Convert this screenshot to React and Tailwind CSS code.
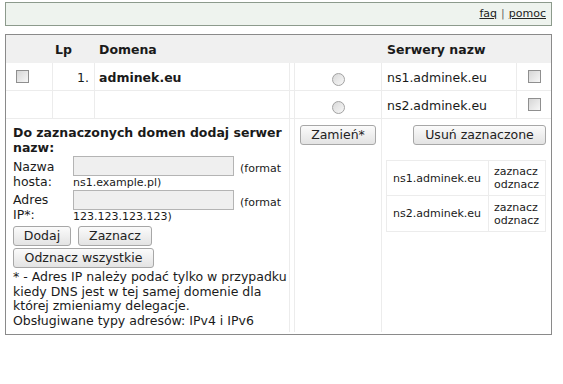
import React from "react";

const font = { fontFamily: '"DejaVu Sans", Verdana, sans-serif' };

const Check = () => (
  <span className="inline-block w-[13px] h-[13px] border border-[#8f8f8f] bg-gradient-to-br from-[#d6d6d6] to-[#f7f7f7]" />
);

const Radio = () => (
  <span className="inline-block w-[13px] h-[13px] rounded-full border border-[#a2a2a2] bg-gradient-to-br from-[#d9d9d9] to-[#f8f8f8]" />
);

const Btn = ({ children, className = "" }) => (
  <button
    className={
      "h-[20px] px-[8px] border border-[#a7a7a7] rounded-[3px] bg-gradient-to-b from-[#fbfbfb] to-[#e3e3e3] text-[12.5px] leading-none text-[#222] " +
      className
    }
  >
    {children}
  </button>
);

const App = () => {
  const servers = ["ns1.adminek.eu", "ns2.adminek.eu"];

  return (
    <div className="w-[563px] h-[384px] bg-white text-[#1a1a1a] pt-[2px]" style={font}>
      {/* top bar */}
      <div className="ml-[5px] w-[547px] h-[24px] border border-[#8c9a8c] bg-[#eef3ee] flex items-center justify-end pr-[5px] text-[11px] text-[#222]">
        <a className="underline">faq</a>
        <span className="mx-[4px] text-[#666]">|</span>
        <a className="underline">pomoc</a>
      </div>

      {/* main table */}
      <div className="ml-[5px] mt-[8px] w-[547px] h-[301px] border border-[#8a8a8a] text-[12.5px]">
        <div className="grid grid-cols-[47px_42px_195px_5px_87px_135px_34px]">
          {/* header */}
          <div className="col-span-7 grid grid-cols-subgrid h-[28px] bg-[#f0f0f0] font-bold items-center pt-[2px]">
            <div />
            <div className="pl-[2px]">Lp</div>
            <div className="pl-[4px]">Domena</div>
            <div />
            <div />
            <div className="col-span-2 pl-[5px]">Serwery nazw</div>
          </div>

          {servers.map((ns, i) => (
            <div key={ns} className="col-span-7 grid grid-cols-subgrid h-[28px] border-b border-[#ececec] items-center">
              <div className="h-full border-r border-[#ececec] flex items-center pl-[10px]">
                {i === 0 && <Check />}
              </div>
              <div className="h-full border-r border-[#ececec] flex items-center justify-end pr-[5px] pt-[4px]">
                {i === 0 && "1."}
              </div>
              <div className="h-full border-r border-[#ececec] flex items-center pl-[4px] pt-[4px] font-bold">
                {i === 0 && "adminek.eu"}
              </div>
              <div className="h-full border-r border-[#ececec]" />
              <div className="h-full border-r border-[#ececec] flex items-center justify-center pt-[5px]">
                <Radio />
              </div>
              <div className="h-full border-r border-[#ececec] flex items-center pl-[5px] pt-[4px]">{ns}</div>
              <div className="h-full flex items-center justify-center">
                <Check />
              </div>
            </div>
          ))}

          {/* bottom section */}
          <div className="col-span-3 h-[213px] border-r border-[#ececec] pl-[7px] pt-[6px] leading-[15px]">
            <div className="font-bold">Do zaznaczonych domen dodaj serwer nazw:</div>
            <div className="grid grid-cols-[60px_1fr] mt-[1px]">
              <div className="pt-[3px]">Nazwa<br />hosta:</div>
              <div>
                <div className="flex items-center">
                  <span className="inline-block w-[161px] h-[20px] border border-[#b4b4b4] bg-[#efefef]" />
                  <span className="ml-[6px] text-[11px] pt-[4px]">(format</span>
                </div>
                <div className="text-[11px] h-[13px] leading-[14px]">ns1.example.pl)</div>
              </div>
              <div className="pt-[3px]">Adres<br />IP*:</div>
              <div className="mt-[1px]">
                <div className="flex items-center">
                  <span className="inline-block w-[161px] h-[20px] border border-[#b4b4b4] bg-[#efefef]" />
                  <span className="ml-[6px] text-[11px] pt-[4px]">(format</span>
                </div>
                <div className="text-[11px] h-[13px] leading-[14px]">123.123.123.123)</div>
              </div>
            </div>
            <div className="flex gap-[7px] mt-[3px]">
              <Btn className="w-[58px]">Dodaj</Btn>
              <Btn className="w-[74px]">Zaznacz</Btn>
            </div>
            <div className="mt-[2px]">
              <Btn className="w-[141px]">Odznacz wszystkie</Btn>
            </div>
            <div className="mt-[2px] leading-[14.5px]">
              * - Adres IP należy podać tylko w przypadku kiedy DNS jest w tej samej domenie dla której zmieniamy delegacje.
              <br />
              Obsługiwane typy adresów: IPv4 i IPv6
            </div>
          </div>
          <div className="h-[213px] border-r border-[#ececec]" />
          <div className="h-[213px] border-r border-[#ececec] pl-[5px] pt-[6px]">
            <Btn className="w-[76px]">Zamień*</Btn>
          </div>
          <div className="col-span-2 h-[213px] pt-[6px] pr-[5px] pl-[4px]">
            <div className="flex justify-end">
              <Btn className="w-[133px]">Usuń zaznaczone</Btn>
            </div>
            <div className="mt-[15px] grid grid-cols-[102px_1fr] border border-[#ececec] text-[11px] leading-[13px]">
              {servers.map((ns, i) => (
                <React.Fragment key={ns}>
                  <div className={"h-[35px] flex items-center pl-[6px] border-r border-[#ececec] " + (i === 0 ? "border-b" : "")}>
                    {ns}
                  </div>
                  <div className={"h-[35px] flex flex-col justify-center pl-[5px] border-[#ececec] " + (i === 0 ? "border-b" : "")}>
                    <span>zaznacz</span>
                    <span>odznacz</span>
                  </div>
                </React.Fragment>
              ))}
            </div>
          </div>
        </div>
      </div>
    </div>
  );
};

export default App;
